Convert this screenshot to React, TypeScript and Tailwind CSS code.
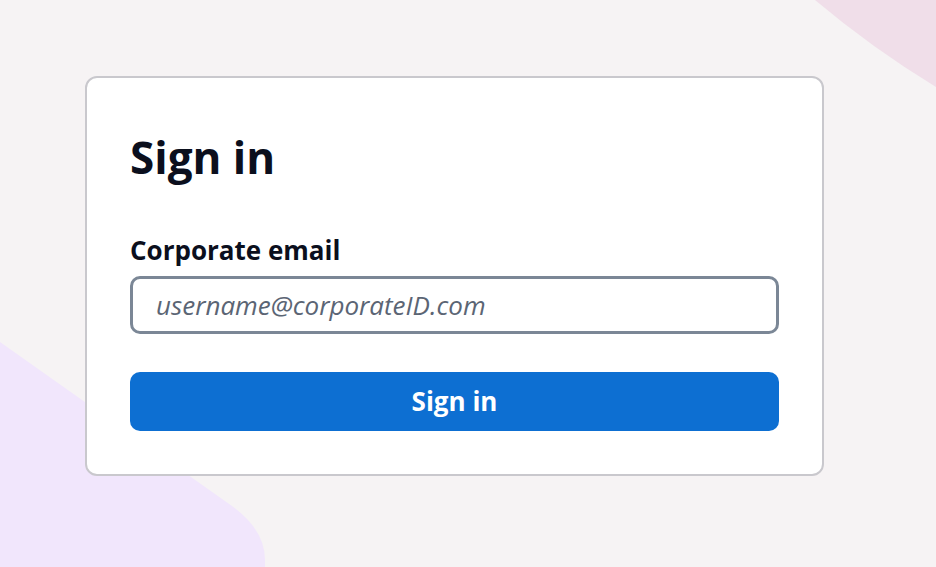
export default function App() {
  return (
    <div className="relative min-h-[567px] overflow-hidden bg-[#f6f3f4] font-['Open_Sans',sans-serif]">
      {/* background decoration */}
      <svg
        className="pointer-events-none absolute inset-0"
        width="936"
        height="567"
        viewBox="0 0 936 567"
      >
        <path d="M0 342 L232 506 Q265 530 265 560 L265 567 L0 567 Z" fill="#f1e6fc" />
        <path d="M815 0 Q872 48 936 87 L936 0 Z" fill="#f0dee9" />
      </svg>

      <div className="relative pl-[85px] pt-[76px]">
        <form
          onSubmit={(e) => e.preventDefault()}
          className="w-[739px] rounded-[12px] border-2 border-[#c9c8cd] bg-white px-[43px] pb-[43px] pt-[49px]"
        >
          <h1 className="text-[44px] font-bold leading-[60px] text-[#0b0f1d]">Sign in</h1>

          <label className="mt-[47px] block text-[26px] font-bold leading-[32px] text-[#0b0f1d]">
            Corporate email
          </label>
          <input
            type="email"
            placeholder="username@corporateID.com"
            className="mt-[10px] block h-[58px] w-full rounded-[10px] border-[3px] border-[#7b8796] px-[23px] text-[26px] text-[#0b0f1d] outline-none placeholder:italic placeholder:text-[#5b6574]"
          />

          <button
            type="submit"
            className="mt-[38px] block h-[59px] w-full rounded-[10px] bg-[#0d6fd2] text-[26px] font-bold text-white"
          >
            Sign in
          </button>
        </form>
      </div>
    </div>
  )
}
